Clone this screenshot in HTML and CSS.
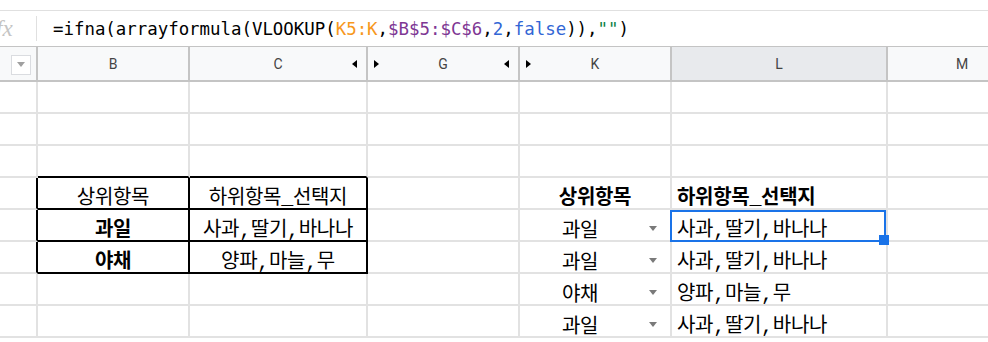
FILE: index.html
```html
<!DOCTYPE html>
<html lang="ko">
<head>
  <meta charset="UTF-8">
  <meta name="viewport" content="width=device-width, initial-scale=1.0">
  <title>하위항목 선택지</title>
  <link rel="stylesheet" href="styles.css">
</head>
<body>

<div class="formula-bar">
  <span class="fx">fx</span>
  <span class="fx-sep"></span>
  <div class="formula">=ifna(arrayformula(VLOOKUP(<span class="ref-a">K5:K</span>,<span class="ref-b">$B$5:$C$6</span>,<span class="num">2</span>,<span class="num">false</span>)),<span class="str">""</span>)</div>
</div>

<div class="sheet">
  <!-- column headers -->
  <div class="colhead corner"><span class="corner-box"><span class="tri"></span></span></div>
  <div class="colhead"><span></span><span>B</span><span></span></div>
  <div class="colhead"><span></span><span>C</span><span class="arrow-l"></span></div>
  <div class="colhead"><span class="arrow-r"></span><span>G</span><span class="arrow-l"></span></div>
  <div class="colhead"><span class="arrow-r"></span><span>K</span><span></span></div>
  <div class="colhead selected"><span></span><span>L</span><span></span></div>
  <div class="colhead"><span></span><span>M</span><span></span></div>

  <!-- row 2 -->
  <div class="cell"></div><div class="cell"></div><div class="cell"></div><div class="cell"></div><div class="cell"></div><div class="cell"></div><div class="cell"></div>
  <!-- row 3 -->
  <div class="cell"></div><div class="cell"></div><div class="cell"></div><div class="cell"></div><div class="cell"></div><div class="cell"></div><div class="cell"></div>
  <!-- row 4 -->
  <div class="cell"></div><div class="cell edge-b"></div><div class="cell edge-b"></div><div class="cell"></div><div class="cell"></div><div class="cell"></div><div class="cell"></div>

  <!-- row 5 -->
  <div class="cell edge-r"></div>
  <div class="cell center edge-r edge-b">상위항목</div>
  <div class="cell center edge-r edge-b">하위항목_선택지</div>
  <div class="cell"></div>
  <div class="cell center bold">상위항목</div>
  <div class="cell bold">하위항목_선택지</div>
  <div class="cell"></div>

  <!-- row 6 -->
  <div class="cell edge-r"></div>
  <div class="cell center bold edge-r edge-b">과일</div>
  <div class="cell center edge-r edge-b">사과,딸기,바나나</div>
  <div class="cell"></div>
  <div class="cell dropdown"><span>과일</span><span class="tri"></span></div>
  <div class="cell active">사과,딸기,바나나<span class="handle"></span></div>
  <div class="cell"></div>

  <!-- row 7 -->
  <div class="cell edge-r"></div>
  <div class="cell center bold edge-r edge-b">야채</div>
  <div class="cell center edge-r edge-b">양파,마늘,무</div>
  <div class="cell"></div>
  <div class="cell dropdown"><span>과일</span><span class="tri"></span></div>
  <div class="cell">사과,딸기,바나나</div>
  <div class="cell"></div>

  <!-- row 8 -->
  <div class="cell"></div><div class="cell"></div><div class="cell"></div><div class="cell"></div>
  <div class="cell dropdown"><span>야채</span><span class="tri"></span></div>
  <div class="cell">양파,마늘,무</div>
  <div class="cell"></div>

  <!-- row 9 -->
  <div class="cell"></div><div class="cell"></div><div class="cell"></div><div class="cell"></div>
  <div class="cell dropdown"><span>과일</span><span class="tri"></span></div>
  <div class="cell">사과,딸기,바나나</div>
  <div class="cell"></div>
</div>

</body>
</html>
```

FILE: styles.css
```css
body {
  margin: 0;
  overflow: hidden;
  background: #fff;
  font-family: "Noto Sans CJK KR", "Noto Sans", sans-serif;
  color: #000;
}

/* formula bar */
.formula-bar {
  margin-top: 10px;
  height: 35px;
  border-top: 1px solid #e0e0e0;
  display: flex;
  align-items: center;
  overflow: hidden;
}
.fx {
  width: 40px;
  margin-left: -4px;
  flex: none;
  font-family: "Liberation Serif", serif;
  font-style: italic;
  font-size: 23px;
  color: #c4c4c4;
  line-height: 1;
}
.fx-sep {
  flex: none;
  width: 1px;
  height: 25px;
  background: #e0e0e0;
}
.formula {
  margin-left: 16px;
  font-family: "DejaVu Sans Mono", monospace;
  font-size: 17.4px;
  white-space: nowrap;
  color: #000;
}
.ref-a { color: #f7981d; }
.ref-b { color: #7e3794; }
.num { color: #3266d5; }
.str { color: #0b8043; }

/* grid */
.sheet {
  display: grid;
  grid-template-columns: 38px 152px 178px 152px 152px 216px 150px;
}
.colhead {
  height: 33px;
  border-top: 1px solid #c4c4c4;
  border-bottom: 2px solid #c4c4c4;
  border-right: 2px solid #c4c4c4;
  background: #f8f9fa;
  display: grid;
  grid-template-columns: 1fr auto 1fr;
  align-items: center;
  font-family: Roboto, "Liberation Sans", sans-serif;
  font-size: 14px;
  color: #444;
}
.colhead.selected {
  background: #e8eaed;
}
.colhead.corner {
  display: flex;
  align-items: center;
  justify-content: flex-start;
  padding-left: 11px;
  padding-top: 2px;
  box-sizing: border-box;
  height: 36px;
}
.corner-box {
  width: 18px;
  height: 18px;
  border: 1px solid #dadce0;
  background: #fff;
  display: flex;
  align-items: center;
  justify-content: center;
}
.corner-box .tri {
  border-left: 4px solid transparent;
  border-right: 4px solid transparent;
  border-top: 5px solid #a0a0a0;
}
.arrow-l {
  justify-self: end;
  margin-right: 9px;
  border-top: 4.5px solid transparent;
  border-bottom: 4.5px solid transparent;
  border-right: 5px solid #000;
}
.arrow-r {
  justify-self: start;
  margin-left: 6px;
  border-top: 4.5px solid transparent;
  border-bottom: 4.5px solid transparent;
  border-left: 5px solid #000;
}

.cell {
  position: relative;
  border-right: 2px solid #e2e2e2;
  border-bottom: 2px solid #e2e2e2;
  display: flex;
  align-items: center;
  padding: 4px 0 0 5px;
  height: 26px;
  font-family: "Liberation Mono", "Noto Sans CJK KR", sans-serif;
  font-size: 20px;
  letter-spacing: -0.3px;
  white-space: nowrap;
}
.cell.center {
  justify-content: center;
  padding-left: 0;
}
.cell.bold {
  font-weight: bold;
}
.edge-r {
  border-right-color: #000;
}
.edge-b {
  border-bottom-color: #000;
}

.dropdown {
  display: grid;
  grid-template-columns: 1fr 30px;
  padding-left: 0;
}
.dropdown span:first-child {
  text-align: center;
}
.dropdown .tri {
  margin-left: 9px;
  width: 0;
  border-left: 4.5px solid transparent;
  border-right: 4.5px solid transparent;
  border-top: 5px solid #7a7a7a;
}

.active::after {
  content: "";
  position: absolute;
  top: 0;
  left: -2px;
  right: 0;
  bottom: -2px;
  border: 2px solid #1a73e8;
}
.handle {
  position: absolute;
  right: -3px;
  bottom: -5px;
  width: 10px;
  height: 10px;
  background: #1a73e8;
  z-index: 1;
}
```
